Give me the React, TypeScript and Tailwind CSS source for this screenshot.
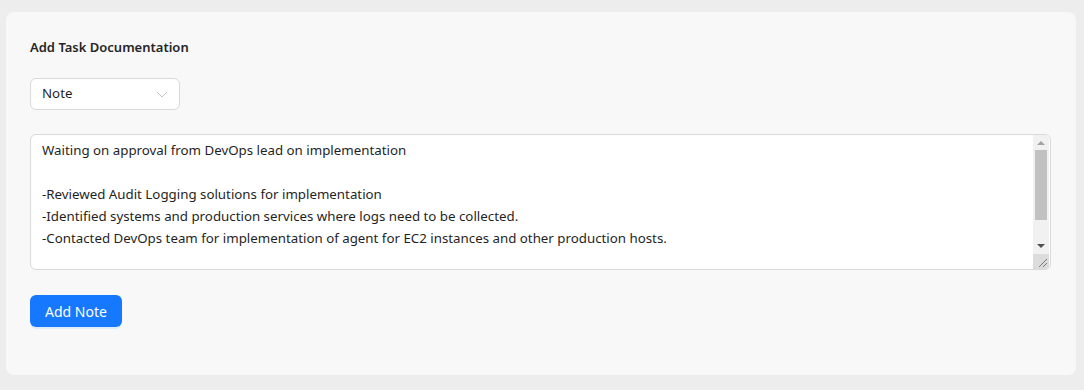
import React from "react";

const lines = [
  "Waiting on approval from DevOps lead on implementation",
  "",
  "-Reviewed Audit Logging solutions for implementation",
  "-Identified systems and production services where logs need to be collected.",
  "-Contacted DevOps team for implementation of agent for EC2 instances and other production hosts.",
];

export default function App() {
  return (
    <div className="w-[1084px] h-[390px] bg-[#ededed] pt-[12px] pl-[6px] pr-[8px] pb-[15px] font-['Noto_Sans',sans-serif]">
      <div className="h-full bg-[#f8f8f8] rounded-[8px] pl-[24px] pr-[25px] pt-[25px]">
        <div className="text-[13px] font-semibold text-[#262626] leading-[20px]">Add Task Documentation</div>
        <div className="mt-[21px] w-[150px] h-[32px] bg-white border border-[#d9d9d9] rounded-[6px] flex items-center justify-between pl-[11px] pr-[11px]">
          <span className="text-[13.3px] text-[#1f1f1f]">Note</span>
          <svg width="12" height="12" viewBox="0 0 12 12" fill="none">
            <path d="M1 4 L6 9 L11 4" stroke="#c4c4c4" strokeWidth="1" />
          </svg>
        </div>
        <div className="mt-[24px] h-[136px] bg-white border border-[#d9d9d9] rounded-[6px] flex overflow-hidden">
          <div className="flex-1 px-[11px] pt-[4px] text-[13.3px] leading-[22px] text-[#1f1f1f] whitespace-pre">
            {lines.map((l, i) => (
              <div key={i} className="h-[22px]">{l}</div>
            ))}
          </div>
          <div className="w-[16px] mr-[1px] flex flex-col bg-[#f1f1f1]">
            <div className="h-[17px] flex items-center justify-center">
              <svg width="8" height="5" viewBox="0 0 8 5"><path d="M0 5 L4 1 L8 5 Z" fill="#a3a3a3" /></svg>
            </div>
            <div className="flex-1 px-[2px] pb-[20px]">
              <div className="h-[70px] bg-[#c1c1c1]" />
            </div>
            <div className="h-[17px] flex items-center justify-center">
              <svg width="8" height="5" viewBox="0 0 8 5"><path d="M0 0 L8 0 L4 4 Z" fill="#505050" /></svg>
            </div>
            <div className="h-[17px] bg-[#dcdcdc] flex items-end justify-end pr-[1px] pb-[1px]">
              <svg width="10" height="10" viewBox="0 0 10 10">
                <path d="M9 1 L1 9 M9 5 L5 9" stroke="#7a7a7a" strokeWidth="1" />
              </svg>
            </div>
          </div>
        </div>
        <button className="mt-[25px] h-[32px] w-[92px] bg-[#1677ff] text-white text-[14px] rounded-[6px] shadow-[0_2px_0_rgba(5,145,255,0.1)]">
          Add Note
        </button>
      </div>
    </div>
  );
}
